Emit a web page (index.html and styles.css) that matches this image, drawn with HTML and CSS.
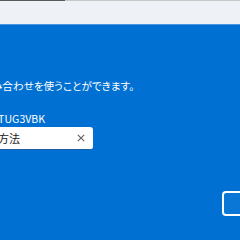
FILE: index.html
```html
<!DOCTYPE html>
<html lang="ja">
<head>
<meta charset="utf-8">
<link rel="stylesheet" href="styles.css">
</head>
<body>
<div class="progress"><div class="progress-done"></div><div class="progress-rest"></div></div>
<div class="header"></div>
<main class="main">
  <div class="content">
    <p class="line1">この組み合わせを使うことができます。</p>
    <p class="line2">コード: TUG3VBK</p>
    <div class="field">
      <span class="field-text">サインイン方法</span>
      <svg class="clear" width="8" height="8" viewBox="0 0 8 8" aria-label="クリア"><path d="M0.8 0.8 L7.2 7.2 M7.2 0.8 L0.8 7.2" stroke="#5f5f5f" stroke-width="1.1" fill="none"/></svg>
    </div>
  </div>
  <div class="footer">
    <button class="next">次へ</button>
  </div>
</main>
</body>
</html>
```
FILE: styles.css
```css
html, body {
  margin: 0;
  padding: 0;
  width: 240px;
  height: 240px;
  overflow: hidden;
  font-family: "Noto Sans CJK JP", "Noto Sans", sans-serif;
}
.progress {
  display: flex;
  height: 1px;
}
.progress-done {
  width: 65px;
  background: #5a5a5a;
}
.progress-rest {
  flex: 1;
  background: #c6c6c6;
}
.header {
  height: 23px;
  background: #eef2f6;
}
.main {
  height: 215px;
  background: #0070d2;
  border-top: 1px solid #4a95de;
  overflow: hidden;
  display: flex;
  flex-direction: column;
}
.content {
  margin-left: -70px;
  padding-top: 53px;
  display: flex;
  flex-direction: column;
}
.line1 {
  margin: 0 0 0 32px;
  color: #fff;
  font-size: 10.6px;
  line-height: 16px;
  font-feature-settings: "palt";
  white-space: nowrap;
}
.line2 {
  margin: 18px 0 0 31px;
  color: #fff;
  font-size: 10.6px;
  line-height: 14px;
  white-space: nowrap;
}
.field {
  margin-top: 1px;
  width: 163px;
  height: 23px;
  box-sizing: border-box;
  background: #fff;
  border-radius: 3px;
  border-bottom: 1px solid #1a5fa8;
  display: flex;
  align-items: center;
  padding: 0 8px 0 13px;
}
.field-text {
  flex: 1;
  font-size: 11px;
  color: #1a1a1a;
  white-space: nowrap;
}
.clear {
  display: block;
}
.footer {
  margin-top: 41px;
  display: flex;
  justify-content: flex-end;
  margin-right: -42px;
}
.next {
  width: 60px;
  height: 25px;
  box-sizing: border-box;
  background: #0a76d6;
  border: 2px solid #fff;
  border-radius: 4px;
  color: #fff;
  font-family: inherit;
  font-size: 10px;
}
```
